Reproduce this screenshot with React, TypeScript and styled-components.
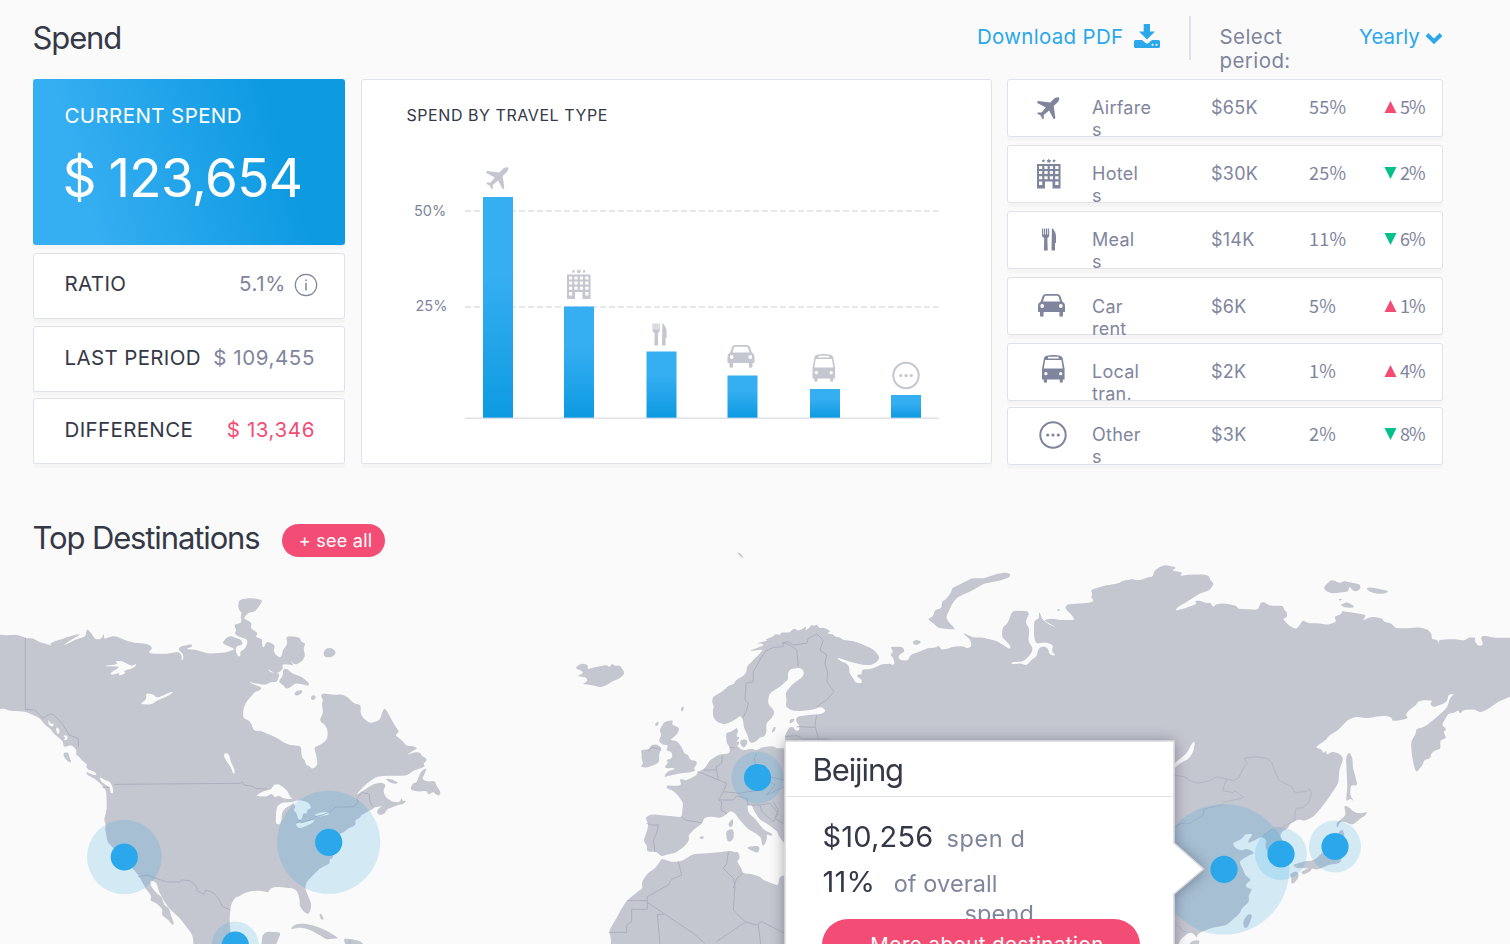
import React from "react";
import styled, { createGlobalStyle } from "styled-components";

const ink = "#343847";
const muted = "#7f859d";
const blue = "#2aa8eb";
const pink = "#f34d75";
const green = "#00c08b";
const land = "#c4c6d0";
const sea = "#fafafa";

const GlobalStyle = createGlobalStyle`
  * { box-sizing: border-box; }
  body { margin: 0; background: ${sea}; overflow: hidden; }
`;

const Page = styled.main`
  width: 1510px;
  height: 944px;
  overflow: hidden;
  display: flex;
  flex-direction: column;
  background: ${sea};
  color: ${ink};
  font-family: Inter, "Liberation Sans", sans-serif;
`;

const Header = styled.header`
  display: flex;
  height: 79px;
  padding: 16px 67px 0 32.5px;
`;

const Title = styled.h1`
  margin: 0;
  font-size: 31px;
  line-height: 44px;
  font-weight: 400;
  letter-spacing: -1.12px;
  white-space: nowrap;
`;

const Download = styled.a`
  display: flex;
  gap: 10.5px;
  margin-left: auto;
  padding-top: 8px;
  height: 44px;
  width: 214px;
  border-right: 2px solid #dfe1e8;
  color: ${blue};
  font-size: 20.5px;
  line-height: 26px;
  letter-spacing: 0.29px;
  white-space: nowrap;
  svg { display: block; flex: none; }
`;

const PeriodLabel = styled.div`
  width: 168px;
  padding: 9px 0 0 28.5px;
  color: ${muted};
  font-size: 20.5px;
  line-height: 24px;
  letter-spacing: 0.42px;
`;

const PeriodValue = styled.div`
  display: flex;
  gap: 5px;
  width: 84px;
  padding-top: 8px;
  color: ${blue};
  font-size: 20.5px;
  line-height: 26px;
  letter-spacing: 0.05px;
  svg { display: block; flex: none; margin-top: 7.5px; }
`;

const Dashboard = styled.section`
  display: grid;
  grid-template-columns: 312px 631px 436px;
  column-gap: 15.5px;
  height: 386px;
  margin-left: 33px;
`;

const Column = styled.div`
  display: flex;
  flex-direction: column;
`;

const Card = styled.div`
  background: #fff;
  border: 1.5px solid #e0e2e9;
  border-radius: 3px;
  box-shadow: 0 4px 0 rgba(40, 44, 60, 0.025);
`;

const SpendCard = styled.div`
  height: 166px;
  padding: 23px 31.5px;
  border-radius: 3px;
  background: linear-gradient(74deg, #36aef2 17%, #0d9ae1 78%);
  box-shadow: 0 4px 0 rgba(40, 44, 60, 0.025);
  color: #fff;
`;

const SpendCaption = styled.div`
  font-size: 20.5px;
  line-height: 28px;
  letter-spacing: 0.4px;
`;

const SpendTotal = styled.div`
  margin: 14px 0 0 -2px;
  font-size: 53px;
  line-height: 68px;
  letter-spacing: -0.7px;
  word-spacing: -1.5px;
  white-space: nowrap;
`;

const StatCard = styled(Card)<{ $gap: number; $lift?: number }>`
  display: flex;
  align-items: center;
  justify-content: space-between;
  height: 66px;
  margin-top: ${(p) => p.$gap}px;
  padding: 0 29px ${(p) => 3 + (p.$lift ?? 0)}px 30.5px;
  font-size: 20.5px;
  letter-spacing: 0.36px;
  white-space: nowrap;
`;

const StatValue = styled.span<{ $alert?: boolean }>`
  display: flex;
  align-items: center;
  gap: 9px;
  color: ${(p) => (p.$alert ? pink : muted)};
  letter-spacing: 0.6px;
  svg { display: block; margin: 2px -3px 0 -1px; }
`;

const ChartCard = styled(Card)`
  height: 385px;
`;

const ChartTitle = styled.h2`
  margin: 0;
  padding: 24px 0 0 45px;
  height: 50px;
  font-size: 16px;
  line-height: 22px;
  font-weight: 400;
  letter-spacing: 0.56px;
`;

const Plot = styled.svg`
  display: block;
  font-size: 14.5px;
  fill: ${muted};
`;

const TypeRow = styled(Card)<{ $gap: number; $shift: number }>`
  display: grid;
  grid-template-columns: 84px 119px 98px 75px 1fr;
  height: 58px;
  margin-top: ${(p) => p.$gap}px;
  padding-top: ${(p) => 17 + p.$shift}px;
  color: ${muted};
  font-size: 18px;
  line-height: 22px;
  letter-spacing: 0.25px;
  white-space: nowrap;
`;

const RowIcon = styled.div<{ $x: number; $y: number }>`
  padding-left: ${(p) => p.$x}px;
  height: 0;
  margin-top: ${(p) => p.$y}px;
  svg { display: block; overflow: visible; }
`;

const Percent = styled.span`
  margin-top: -2px;
  font-family: "Noto Sans CJK SC", sans-serif;
  letter-spacing: 0.2px;
`;

const Change = styled(Percent)`
  display: flex;
  gap: 3px;
  letter-spacing: -1px;
  svg { display: block; margin-top: 6px; }
`;

const MapSection = styled.section`
  position: relative;
  height: 479px;
`;

const MapDrawing = styled.svg`
  display: block;
  height: 479px;
`;

const MapHeading = styled.div`
  position: absolute;
  left: 32.5px;
  top: 51px;
  display: flex;
  gap: 22.5px;
`;

const SeeAll = styled.button`
  margin: 8px 0 0;
  width: 103px;
  height: 33px;
  padding: 0 0 0 4px;
  border: 0;
  border-radius: 17px;
  background: ${pink};
  color: #fff;
  font: 400 18px/33px Inter, sans-serif;
  letter-spacing: 0.27px;
  white-space: nowrap;
`;

const Popover = styled.article`
  position: absolute;
  left: 784px;
  top: 275px;
  width: 391px;
  height: 230px;
  padding: 0 2px;
  filter: drop-shadow(0 1px 7px rgba(30, 35, 50, 0.4));
`;

const PopoverShape = styled.svg`
  position: absolute;
  left: 0;
  top: 0;
  overflow: visible;
`;

const PopoverBody = styled.div`
  position: relative;
`;

const PopoverTitle = styled.h3`
  margin: 0;
  height: 57px;
  padding: 8px 0 0 26.5px;
  border-bottom: 1.5px solid #e4e4e6;
  font-size: 31px;
  line-height: 44px;
  font-weight: 400;
  letter-spacing: -1.1px;
`;

const Fact = styled.p<{ $top: number; $gap: number }>`
  display: flex;
  align-items: baseline;
  gap: ${(p) => p.$gap}px;
  margin: ${(p) => p.$top}px 0 0 36.5px;
  font-size: 29px;
  line-height: 40px;
  letter-spacing: 0.2px;
  white-space: pre;
`;

const FactNote = styled.span<{ $tracking: number }>`
  color: ${muted};
  font-size: 23.5px;
  letter-spacing: ${(p) => p.$tracking}px;
`;

const FactWrap = styled.div`
  margin: -10px 0 0 178.5px;
  height: 26px;
  color: ${muted};
  font-size: 23.5px;
  line-height: 40px;
  letter-spacing: 0.15px;
`;

const MoreButton = styled.button`
  position: relative;
  display: block;
  width: 318px;
  height: 52px;
  margin: -1px 0 0 36px;
  padding: 0 0 2px 12px;
  border: 0;
  border-radius: 26px;
  background: ${pink};
  color: #fff;
  font: 400 20.5px/52px Inter, sans-serif;
  letter-spacing: 0.45px;
`;

type Kind = "plane" | "hotel" | "meal" | "car" | "bus" | "other";

/* Filled travel pictograms; `bg` punches windows and lamps out of the shape. */
function Glyph({ kind, bg = "#fff" }: { kind: Kind; bg?: string }) {
  switch (kind) {
    case "plane":
      return (
        <path d="M22 .4C20.2-.3 18 .7 16.8 2L13.2 5.6 1.1 4.1Q0 4.6 .3 6L8.8 10.4 4.6 15.6.9 15.4 0 16.6 3.7 18.6 5.6 22.3 6.9 21.5 6.7 17.9 12.1 13.5 16.6 22 17.9 21.7Q18.6 21.2 18.2 20L16.7 9 20.4 5.4C21.8 4 22.8 2 22 .4Z" />
      );
    case "hotel":
      return (
        <g>
          <path d="M0 5H23.5V29.5H15.5V22.500H8V29.5H0Z" />
          <path fill={bg} d="M2 7h3.2v3H2zm5.4 0h3.2v3H7.400zm5.400 0H16v3h-3.200zM18.200 7h3.300v3h-3.300zM2 12h3.200v3H2zm5.400 0h3.200v3H7.400zm5.400 0H16v3h-3.200zm5.400 0h3.300v3h-3.300zM2 17.200h3.200v3H2zm5.400 0h3.200v3H7.400zm5.400 0H16v3h-3.200zm5.400 0h3.300v3h-3.300zM2 22.500h3.200v3.500H2zm16.200 0h3.300v3.500h-3.300z" />
          <path d="m11.800-.5.8 1.500 1.700.2-1.200 1.200.3 1.700-1.600-.8-1.500.8.300-1.700-1.300-1.200 1.700-.2zM6.400 0l.6 1.100 1.200.2-.9.800.2 1.300-1.100-.6-1.100.6.200-1.300-.9-.8 1.200-.2zM17.100 0l.6 1.100 1.200.2-.9.800.2 1.300-1.100-.6-1.100.6.200-1.300-.9-.8 1.200-.2z" />
        </g>
      );
    case "meal":
      return (
        <path d="M0 .5H1.100V6.500H1.900V.5H3.200V6.500H4V.5H5.300V6.500H6.100V.5H7.200V7.500Q7.200 9 5.400 10L5.700 22.500H1.900L2.200 10Q0 9 0 7.500ZM9.900 0Q13 2 14 7.500V15H13V22.500H9.500Z" />
      );
    case "car":
      return (
        <g>
          <path d="M8 0H19Q21.500 0 22.400 2L24.300 7.500Q27 9 27 11.500V18H25V21.200Q25 22.700 23.200 22.700T21.400 21.200V18H5.600V21.200Q5.600 22.700 3.800 22.700T2 21.200V18H0V11.500Q0 9 2.700 7.500L4.600 2Q5.500 0 8 0Z" />
          <path fill={bg} d="M8 1.700H19Q20.300 1.700 20.700 3L22 7.500H5L6.300 3Q6.700 1.700 8 1.700Z" />
          <circle fill={bg} cx="4.200" cy="12" r="1.900" />
          <circle fill={bg} cx="22.800" cy="12" r="1.900" />
        </g>
      );
    case "bus":
      return (
        <g>
          <path d="M2 3Q2.500 0 11.300 0T20.600 3L22.600 14V24.500H20.800V26.500Q20.800 27.700 19.300 27.700T17.700 26.500V24.500H5V26.500Q5 27.700 3.400 27.700T1.800 26.500V24.500H0V14Z" />
          <path fill={bg} d="M6 1.800H16.600V3.500H6ZM3.200 5H19.400L20.700 13.500H1.800Z" />
          <circle fill={bg} cx="3.900" cy="18.700" r="1.600" />
          <circle fill={bg} cx="18.700" cy="18.700" r="1.600" />
        </g>
      );
    default:
      return (
        <g>
          <circle cx="14" cy="14" r="12.700" fill="none" stroke="currentColor" strokeWidth="2" />
          <circle cx="8.700" cy="14" r="1.600" />
          <circle cx="14" cy="14" r="1.600" />
          <circle cx="19.300" cy="14" r="1.600" />
        </g>
      );
  }
}

type RowData = {
  kind: Kind;
  lines: [string, string];
  amount: string;
  share: string;
  up: boolean;
  change: string;
  gap: number;
  shift: number;
  x: number;
  y: number;
};

const rows: RowData[] = [
  { kind: "plane", lines: ["Airfare", "s"], amount: "$65K", share: "55%", up: true, change: "5%", gap: 0, shift: 0, x: 28.5, y: 0 },
  { kind: "hotel", lines: ["Hotel", "s"], amount: "$30K", share: "25%", up: false, change: "2%", gap: 8, shift: 0, x: 29, y: -4.500 },
  { kind: "meal", lines: ["Meal", "s"], amount: "$14K", share: "11%", up: false, change: "6%", gap: 8, shift: 0, x: 34, y: -1 },
  { kind: "car", lines: ["Car", "rent"], amount: "$6K", share: "5%", up: true, change: "1%", gap: 8, shift: 1, x: 30, y: -1 },
  { kind: "bus", lines: ["Local", "tran."], amount: "$2K", share: "1%", up: true, change: "4%", gap: 8, shift: 0, x: 33.5, y: -6 },
  { kind: "other", lines: ["Other", "s"], amount: "$3K", share: "2%", up: false, change: "8%", gap: 6, shift: -1, x: 31, y: -4 },
];

const bars: { kind: Kind; x: number; top: number; ix: number; iy: number }[] = [
  { kind: "plane", x: 483, top: 197, ix: 486, iy: 167 },
  { kind: "hotel", x: 564, top: 306.500, ix: 567, iy: 269.500 },
  { kind: "meal", x: 646.500, top: 351.500, ix: 652.500, iy: 323 },
  { kind: "car", x: 727.500, top: 375.500, ix: 727.500, iy: 345 },
  { kind: "bus", x: 810, top: 389, ix: 812.500, iy: 354 },
  { kind: "other", x: 891, top: 395, ix: 892, iy: 361.500 },
];

function SpendChart() {
  return (
    <Plot width="628" height="332" viewBox="362 130 628 332">
      <defs>
        <linearGradient id="bar" x1="0" y1="0" x2="0" y2="1">
          <stop offset="0.35" stopColor="#36aef2" />
          <stop offset="1" stopColor="#0d9ae1" />
        </linearGradient>
      </defs>
      <g stroke="#dfe1e6" strokeWidth="1.500">
        <path d="M465 211H939M465 307H939" strokeDasharray="6 3" />
        <path d="M465 418.200H939" />
      </g>
      <text x="414" y="216" letterSpacing="0">50%</text>
      <text x="415.500" y="311" letterSpacing="0">25%</text>
      {bars.map((b) => (
        <g key={b.kind}>
          <rect x={b.x} y={b.top} width="30" height={417.700 - b.top} fill="url(#bar)" />
          <g transform={`translate(${b.ix} ${b.iy})`} fill={land} color={land}>
            <Glyph kind={b.kind} />
          </g>
        </g>
      ))}
    </Plot>
  );
}

/* Turns closed point lists into outlines whose corners are softly rounded. */
function coast(outline: string | string[]) {
  const source = Array.isArray(outline) ? outline.join("") : outline;
  return source
    .split("Z")
    .filter(Boolean)
    .map((ring) => {
      const n = (ring.match(/-?[\d.]+/g) ?? []).map(Number);
      const pts: [number, number][] = [];
      for (let i = 0; i + 1 < n.length; i += 2) pts.push([n[i], n[i + 1]]);
      const toward = (a: [number, number], b: [number, number]) => {
        const t = Math.min(0.4, 9 / (Math.hypot(b[0] - a[0], b[1] - a[1]) || 1));
        return `${(a[0] + (b[0] - a[0]) * t).toFixed(1)} ${(a[1] + (b[1] - a[1]) * t).toFixed(1)}`;
      };
      return (
        pts
          .map((p, i) => {
            const before = pts[(i + pts.length - 1) % pts.length];
            const after = pts[(i + 1) % pts.length];
            return `${i ? "L" : "M"}${toward(p, before)}Q${p[0]} ${p[1]} ${toward(p, after)}`;
          })
          .join("") + "Z"
      );
    })
    .join("");
}

/* Every region is traced at three units per pixel in its own frame. */
const america =
  "M-20 402 20 406 45 404 70 410 78 415 100 415 115 425 135 431 155 437 150 430 175 420 185 418 200 412 225 405 240 402 235 408 215 418 195 432 190 437 215 425 235 415 250 412 258 405 260 386 272 396 285 418 303 418 312 400 312 418 330 410 345 408 370 418 385 424 405 428 445 432 458 445 445 456 455 461 500 461 535 455 545 465 545 482 550 478 550 462 535 450 540 440 575 432 578 440 555 447 585 449 625 461 675 458 705 448 690 440 666 430 680 412 695 408 710 415 725 420 728 435 710 437 706 450 714 470 722 468 720 455 735 447 742 430 742 418 715 410 703 400 710 390 703 380 705 372 725 370 722 345 727 340 715 328 715 305 725 297 755 294 788 300 780 315 765 335 745 338 730 355 745 362 755 370 752 385 775 400 765 410 788 418 785 430 790 445 800 424 815 430 825 437 820 455 835 472 845 470 848 450 863 432 858 412 870 408 900 412 903 425 917 430 910 445 916 468 905 485 885 495 870 480 882 497 858 492 845 495 850 505 835 520 820 518 800 505 812 518 840 520 830 548 815 545 795 555 745 546 765 555 785 562 780 572 765 575 740 605 730 625 729 655 750 662 762 693 780 692 805 702 835 715 845 725 870 735 903 738 905 772 915 782 918 795 928 798 937 808 953 795 950 770 942 742 955 738 975 725 983 712 983 690 975 675 958 662 970 638 965 610 970 600 962 588 968 580 1005 585 1025 583 1045 592 1060 610 1083 615 1081 640 1090 655 1110 670 1140 660 1145 642 1153 623 1165 640 1175 660 1190 685 1198 695 1185 706 1200 715 1220 738 1240 738 1253 745 1240 752 1218 766 1245 756 1262 758 1265 768 1280 775 1278 785 1270 790 1275 800 1240 812 1225 824 1215 827 1150 827 1125 832 1095 855 1068 885 1085 875 1100 865 1120 852 1145 847 1158 855 1150 870 1155 890 1175 905 1198 908 1205 893 1208 903 1220 902 1210 912 1195 915 1160 928 1155 940 1140 946 1130 938 1135 925 1150 918 1125 922 1112 930 1095 940 1085 945 1078 955 1065 960 1068 975 1045 985 1030 998 1020 1000 1000 1065 998 1075 988 1078 990 1090 960 1105 940 1125 920 1145 915 1165 925 1190 934 1210 932 1230 925 1243 910 1235 898 1215 900 1205 893 1175 880 1165 855 1163 830 1160 810 1165 805 1178 785 1172 760 1172 735 1178 715 1190 705 1193 692 1215 689 1250 690 1290 710 1350 582 1350 578 1305 555 1275 540 1255 510 1228 490 1200 475 1170 470 1148 450 1140 452 1158 470 1180 485 1190 492 1215 508 1225 512 1245 523 1272 515 1275 508 1262 485 1245 488 1228 470 1210 450 1202 455 1188 440 1170 433 1158 415 1125 400 1108 370 1070 340 1045 322 1025 318 1000 315 985 318 975 312 960 320 930 320 898 318 870 308 858 290 840 258 822 260 815 280 825 292 825 280 812 265 810 258 800 262 793 250 785 235 768 228 765 230 750 215 735 190 742 190 725 175 712 160 700 150 685 135 675 120 655 78 635 25 632 15 625 -20 630Z";
const americaIsles = [
  "M970 460 975 448 988 443 1003 448 1008 460 995 472 975 472Z",
  "M835 545 850 525 848 510 860 505 875 520 905 530 928 550 925 558 905 552 885 550 872 562 858 567 850 555Z",
  "M882 582 890 573 908 570 905 580 890 588Z",
  "M932 592 938 585 948 588 943 600 935 600Z",
  "M190 758 205 757 207 768 215 788 205 785 192 772Z",
  "M1230 870 1238 850 1250 848 1262 815 1280 803 1275 820 1265 838 1285 845 1305 842 1308 855 1322 875 1318 888 1305 882 1300 875 1285 885 1280 872 1255 875Z",
  "M1155 835 1175 838 1195 847 1190 852 1170 848Z",
  "M870 1288 885 1273 910 1270 945 1278 980 1292 1017 1315 975 1318 965 1308 930 1290 905 1282Z",
  "M958 1242 965 1242 972 1260 962 1258Z",
  "M783 1350 787 1305 800 1295 843 1297 835 1318 820 1350Z",
  "M1030 1315 1060 1318 1085 1325 1097 1345 1040 1345Z",
];
const americaWater = [
  "M312 498 355 492 345 484 365 482 378 490 398 498 408 490 407 500 390 508 370 512 378 520 355 528 360 518 335 525 330 520 345 510 360 500Z",
  "M420 612 440 598 437 580 458 582 472 594 515 575 520 577 505 588 470 602 455 614Z",
  "M670 765 678 758 688 765 692 785 704 808 704 822 698 820 695 805 680 785Z",
  "M767 888 785 875 815 868 820 855 835 852 850 862 862 872 870 890 878 898 850 895 835 886 825 893 815 880 800 890Z",
  "M830 920 845 908 885 905 878 912 855 925 845 940 845 960 838 975 827 970 828 945Z",
  "M878 905 895 900 925 906 935 925 922 928 920 942 910 938 905 960 895 960 890 940 880 930 887 920Z",
  "M887 970 905 968 922 963 945 958 940 968 918 978 900 985 890 980Z",
  "M942 945 960 938 988 935 985 945 955 950Z",
  "M298 830 315 840 330 845 338 860 340 880 332 880 330 865 318 855 303 845Z",
  "M145 658 152 672 162 670 160 680 145 675Z",
  "M170 680 180 690 175 705 168 692Z",
  "M188 708 202 705 203 720 190 720 198 713Z",
];
const americaBorders =
  "M76 413V628L105 630 128 655 148 642 162 645 190 675 207 705 235 715 235 742M307 862H330M342 853 722 850 727 845 732 855 755 858 770 866 800 867M945 950 968 945 990 935 1005 922 1060 920 1072 910 1072 895 1085 878 1108 882 1110 905 1118 920M890 968 900 960 905 968 940 958M415 1130 440 1125 500 1146 540 1146 545 1140 570 1142 590 1160 592 1172 612 1183 618 1170 640 1178 655 1195 668 1220 692 1230M1050 1320V1332";

const scandinavia =
  "M568 333 595 322 612 316 605 310 590 312 605 305 622 303 615 298 640 290 645 282 663 285 660 278 690 277 695 270 705 265 712 272 722 270 740 258 735 272 750 262 752 255 765 258 770 253 778 265 790 262 812 273 800 280 820 283 825 290 840 292 850 300 880 303 905 312 940 328 955 345 958 355 950 367 930 376 900 373 870 365 830 352 840 363 860 370 868 380 868 400 880 415 885 428 908 430 905 418 890 410 895 402 915 405 940 413 945 405 930 388 950 385 970 373 995 370 995 640 675 640 675 585 688 562 700 560 705 572 718 572 718 555 708 545 710 530 745 525 785 522 798 513 785 500 755 510 720 513 695 512 677 500 680 480 676 458 700 430 730 410 732 392 718 383 690 388 683 400 685 418 660 440 628 460 623 490 645 515 635 535 618 550 620 575 613 590 600 592 585 608 568 608 563 585 552 565 548 535 540 527 525 540 495 553 475 548 460 535 458 510 462 500 457 490 457 472 490 453 505 437 522 432 528 420 550 408 560 395 560 380 580 360 600 340 610 328Z";
const europe =
  "M508 618 500 610 498 585 500 578 515 575 530 563 535 572 528 590 540 592 530 603 530 618 550 632 575 625 590 632 605 622 640 618 650 625 675 625 760 620 760 910 675 910 668 905 655 885 652 875 640 865 620 850 600 840 590 825 580 808 575 795 562 795 565 820 583 833 600 855 612 870 638 882 635 888 618 883 622 893 612 918 605 915 605 895 590 882 565 868 548 850 535 835 525 820 512 812 500 822 480 835 460 830 432 832 428 850 410 862 385 885 388 900 375 918 345 940 325 942 305 950 290 935 260 935 262 918 250 903 262 870 265 850 255 832 275 823 330 828 365 832 367 810 370 790 355 768 340 752 320 745 320 736 345 738 365 735 358 718 370 718 375 722 392 715 410 705 412 697 435 685 450 660 475 645 485 643 510 640Z";
const africa =
  "M305 955 330 965 345 965 365 963 400 942 440 940 495 935 510 932 525 937 535 935 540 955 530 965 545 985 548 1000 575 1002 600 1010 610 1020 635 1030 655 1037 658 1010 675 1005 760 1005 760 1230 153 1230 153 1195 147 1175 155 1158 175 1125 182 1110 200 1082 240 1050 248 1045 245 1025 265 998 285 985 300 965Z";
const europeIsles = [
  "M45 385 62 370 85 375 82 388 98 383 115 380 140 375 150 382 155 370 165 378 180 376 195 400 180 415 155 425 140 435 120 442 95 435 66 432 82 425 80 412 50 408 70 400 65 392Z",
  "M305 560 312 545 340 540 335 555 358 562 355 578 340 592 330 600 350 603 365 620 372 640 385 645 390 660 410 663 410 675 400 685 408 692 390 697 360 700 335 705 310 712 325 692 340 690 345 683 325 685 312 682 325 668 318 660 338 655 335 635 318 632 325 615 308 615 295 602 305 585 298 570Z",
  "M245 640 242 630 268 628 270 618 285 612 300 618 305 628 297 640 298 665 290 672 260 683 240 680 250 670 245 660Z",
  "M285 550 295 545 297 553 287 560Z",
  "M362 505 370 498 372 508 365 516Z",
  "M540 600 560 598 563 608 552 625 542 615Z",
  "M530 605 538 605 535 618 528 612Z",
  "M635 575 640 562 648 560 645 572 637 578Z",
  "M688 540 700 535 705 540 690 552Z",
  "M505 850 518 835 520 850 515 862 507 860Z",
  "M498 872 520 866 522 895 508 907 500 900Z",
  "M418 890 430 888 432 895 422 898Z",
  "M560 922 578 918 600 918 595 940 570 930Z",
  "M530 37 540 39 553 55 543 51Z",
];
const europeBorders =
  "M548 535 560 510 565 490 555 480 558 430 580 425 580 395 590 378 605 350 618 332 640 322 670 320 668 308 690 315 710 330 715 380M668 308 685 305 700 315 740 310 745 295 770 282 790 300 780 330 800 345 795 370 803 400 800 425 822 455 800 480 770 500M770 525 765 555 775 597M710 560 765 562M675 590 710 587 730 597H805M510 622 525 624M487 645 485 670 468 680 475 720 500 730 490 755 475 780 485 785 483 810 500 820M413 695 440 705 475 720M430 690 470 690M490 755 540 760 565 755 590 752M480 780 520 780 530 768 560 775M590 640 583 655 590 685M625 710 675 720M630 725 645 735 620 765 675 740M560 775 565 795 600 795 605 815 640 845 655 820 630 790 600 795M640 785 655 810 645 835 670 850M365 830 375 840 425 848M260 850 275 855 295 855 290 880 280 900 285 935M265 635 275 622 300 628M505 937 500 970 490 985 520 1015 525 1040 520 1110 555 1145 550 1150 470 1205M520 1045 530 1015 548 1000M355 965 365 1005 335 1018 325 1035 262 1070V1108H215V1145L200 1155V1177H147M202 1082H262M262 1087 400 1180 435 1210M300 1212 292 1123H312M555 1145 590 1155 605 1145 675 1180M595 1155 602 1212";

const russia =
  "M245 388 270 388 290 380 310 371 345 375 340 352 330 345 340 335 330 320 368 320 375 335 355 345 358 360 385 362 390 345 420 335 440 325 470 322 475 315 485 330 505 325 520 320 550 318 560 326 575 320 572 300 547 278 580 292 610 293 650 303 690 328 692 318 665 290 668 262 683 250 697 212 745 213 748 235 775 235 778 213 785 235 800 250 828 262 790 240 815 235 840 240 885 240 875 225 855 205 860 193 935 188 942 180 932 172 938 165 932 150 970 138 1020 130 1025 123 1060 118 1075 122 1118 110 1125 95 1150 77 1170 82 1170 650 245 650Z";
const siberia =
  "M-20 140 0 135 25 130 45 122 70 117 75 122 100 120 110 112 130 112 130 97 145 82 165 75 200 82 185 92 218 97 210 108 245 103 285 104 297 108 300 120 312 130 300 150 270 160 235 183 205 200 195 212 225 205 260 192 255 183 270 182 288 190 302 187 308 202 320 192 345 190 380 198 385 207 405 207 445 210 450 190 460 185 480 197 520 197 522 210 530 215 532 232 518 235 535 255 557 268 568 258 578 240 595 250 630 250 652 255 680 245 672 230 695 222 695 213 740 220 770 225 757 242 785 230 818 235 820 245 845 250 855 265 885 265 930 262 955 270 965 283 965 297 983 300 985 312 987 300 1025 297 1065 302 1075 292 1097 293 1093 303 1105 318 1120 315 1112 290 1125 287 1150 293 1220 293 1220 462 1165 485 1130 510 1110 518 1095 508 1060 510 1050 522 1045 510 1030 520 1015 520 995 555 1010 568 1000 575 1010 595 990 600 992 628 975 630 962 643 962 655 942 660 938 675 918 698 910 670 905 640 903 605 918 580 918 567 945 560 970 540 1010 505 1022 470 1035 463 1015 463 1012 485 985 497 968 502 960 490 968 483 950 480 925 483 918 495 895 512 887 525 895 535 865 542 845 542 848 535 830 527 800 530 770 535 740 530 715 538 685 570 655 588 650 598 615 622 635 628 640 640 648 632 650 645 665 635 688 640 700 655 688 690 685 730 655 775 630 808 610 830 585 843 565 838 540 850 535 865 515 875 510 890 530 920 545 960 525 980 492 980 478 945 465 918 470 900 455 890 415 910 415 900 430 882 405 882 395 898 368 908 375 925 395 932 410 925 435 938 410 950 387 965 400 990 405 1005 425 1020 408 1030 408 1042 428 1048 415 1065 418 1085 395 1105 390 1120 350 1155 300 1165 262 1182 262 1195 250 1180 235 1178 210 1200 200 1230 -20 1230Z";
const novaya =
  "M442 237 460 230 463 210 485 205 485 185 498 178 515 155 515 145 550 128 575 115 610 115 650 102 680 97 692 103 688 112 665 120 610 132 575 152 535 170 520 185 498 230 505 245 527 268 510 268 475 264 460 250Z";
const kolguev = "M397 305 410 299 425 306 412 315 402 314ZM830 208 842 208 835 215Z";
const obGulf =
  "M745 225 752 218 762 222 775 210 778 235 762 242 762 290 768 312 795 306 820 315 815 335 828 347 808 345 805 325 790 318 775 325 770 350 755 358 740 377 722 370 695 373 695 366 730 365 755 340 758 322 745 305 748 265 736 248Z";
const baikal = "M190 672 230 640 248 606 255 606 250 635 235 658 212 668 190 688Z";
const siberiaIsles = [
  "M642 140 665 118 690 130 700 123 750 133 752 145 740 155 728 152 718 138 715 155 690 158 665 160 645 152Z",
  "M768 145 780 142 835 152 830 160 805 162 780 156Z",
  "M690 195 710 186 728 195 733 203 705 203Z",
  "M683 178 697 176 692 183Z",
  "M708 650 718 636 728 655 728 680 743 737 722 735 720 765 732 785 722 775 708 785 712 740Z",
  "M702 798 712 798 735 818 755 820 772 815 765 828 750 835 742 845 725 855 705 845 690 845 682 865 678 850 708 825Z",
  "M690 870 700 870 705 900 715 920 695 955 690 970 655 975 620 990 608 985 560 985 548 975 590 962 612 962 640 935 665 920Z",
  "M572 995 605 980 605 992 580 1005Z",
  "M538 1003 560 992 568 1010 550 1032 543 1028 545 1012Z",
  "M400 1140 415 1122 427 1125 420 1148 408 1167 400 1158Z",
  "M236 1216 245 1202 270 1200 265 1216Z",
];
const asiaBorders =
  "M193 706 222 710 240 722 265 730 305 720 320 710 350 717 370 722 385 715 400 685 412 672 402 655 440 650 472 655 485 668 505 720 545 740 555 757 590 755 597 747 605 760 595 788 580 803 558 805 555 820 555 840 540 850 515 863 492 863 460 887M350 717 337 752 370 758 375 752 398 770 395 775 345 785 335 795 282 807 280 825 240 850H215L193 860M193 1155 210 1160 215 1172 230 1175";

const pins: [number, number, number][] = [
  [124.300, 857, 37.300],
  [328.700, 842.300, 51.500],
  [235.300, 945, 23.500],
  [757.500, 777.500, 26],
  [1224, 869.300, 65.300],
  [1281, 854, 26],
  [1335, 846.500, 26],
];

function WorldMap() {
  return (
    <MapDrawing width="1510" height="479" viewBox="0 465 1510 479" fill={land} strokeLinejoin="round">
      <g transform="translate(0 500) scale(.33333)">
        <path d={coast(america)} />
        <path d={coast(americaIsles)} />
        <path d={coast(americaWater)} fill={sea} />
        <path d={americaBorders} fill="none" stroke="#a8aab9" strokeWidth="2.500" />
      </g>
      <g transform="translate(560 540) scale(.33333)">
        <path d={coast(scandinavia)} />
        <path d={coast(europe)} />
        <path d={coast(africa)} />
        <path d={coast(europeIsles)} />
      </g>
      <g transform="translate(780 540) scale(.33333)">
        <path d={coast(russia)} />
        <path d={coast(novaya)} />
        <path d={coast(kolguev)} />
      </g>
      <g transform="translate(1110 540) scale(.33333)">
        <path d={coast(siberia)} />
        <path d={coast(siberiaIsles)} />
        <path d={coast(baikal)} fill={sea} />
        <path d={asiaBorders} fill="none" stroke="#b0b2c0" strokeWidth="2.500" />
      </g>
      <path transform="translate(780 540) scale(.33333)" d={coast(obGulf)} fill={sea} />
      <path
        transform="translate(560 540) scale(.33333)"
        d={europeBorders}
        fill="none"
        stroke="#a8aab9"
        strokeWidth="2.500"
      />
      {pins.map(([x, y, r]) => (
        <circle key={x} cx={x} cy={y} r={r} fill="rgba(42,163,225,.19)" />
      ))}
      {pins.map(([x, y]) => (
        <circle key={x} cx={x} cy={y} r="13.600" fill={blue} />
      ))}
    </MapDrawing>
  );
}

export default function App() {
  return (
    <Page>
      <GlobalStyle />
      <Header>
        <Title>Spend</Title>
        <Download>
          Download PDF
          <svg width="26" height="25" viewBox="0 0 26 25" fill={blue}>
            <path d="M9.700 0H16V7.500H21L13 15.500 5 7.500H9.700ZM1.500 16H8L11.500 19Q13 20 14.500 19L18 16H24.500Q26 16 26 17.500V22.500Q26 24 24.500 24H1.500Q0 24 0 22.500V17.500Q0 16 1.500 16Z" />
            <circle cx="18.500" cy="20.700" r="1" fill="#fff" />
            <circle cx="22.500" cy="20.700" r="1" fill="#fff" />
          </svg>
        </Download>
        <PeriodLabel>
          Select
          <br />
          period:
        </PeriodLabel>
        <PeriodValue>
          Yearly
          <svg width="18" height="13" viewBox="0 0 18 13">
            <path d="M2 2.500 9 9.500 16 2.500" fill="none" stroke={blue} strokeWidth="4" />
          </svg>
        </PeriodValue>
      </Header>
      <Dashboard>
        <Column>
          <SpendCard>
            <SpendCaption>CURRENT SPEND</SpendCaption>
            <SpendTotal>$ 123,654</SpendTotal>
          </SpendCard>
          <StatCard $gap={8} $lift={2}>
            RATIO
            <StatValue>
              5.1%
              <svg width="24" height="24" viewBox="0 0 24 24" fill="none" stroke={muted}>
                <circle cx="12" cy="12" r="10.700" strokeWidth="1.200" />
                <path d="M12 10V17.500M12 6.500V8.200" strokeWidth="1.500" />
              </svg>
            </StatValue>
          </StatCard>
          <StatCard $gap={7}>
            LAST PERIOD<StatValue>$ 109,455</StatValue>
          </StatCard>
          <StatCard $gap={6}>
            DIFFERENCE<StatValue $alert>$ 13,346</StatValue>
          </StatCard>
        </Column>
        <ChartCard>
          <ChartTitle>SPEND BY TRAVEL TYPE</ChartTitle>
          <SpendChart />
        </ChartCard>
        <Column>
          {rows.map((r) => (
            <TypeRow key={r.kind} $gap={r.gap} $shift={r.shift}>
              <RowIcon $x={r.x} $y={r.y - r.shift}>
                <svg width="28" height="30" fill={muted} color={muted}>
                  <Glyph kind={r.kind} />
                </svg>
              </RowIcon>
              <span>
                {r.lines[0]}
                <br />
                {r.lines[1]}
              </span>
              <span>{r.amount}</span>
              <Percent>{r.share}</Percent>
              <Change>
                <svg width="13" height="12" viewBox="0 0 13 12">
                  {r.up ? <path d="M6.500 0 12.500 12H.5Z" fill={pink} /> : <path d="M.5 0H12.500L6.500 12Z" fill={green} />}
                </svg>
                {r.change}
              </Change>
            </TypeRow>
          ))}
        </Column>
      </Dashboard>
      <MapSection>
        <WorldMap />
        <MapHeading>
          <Title as="h2">Top Destinations</Title>
          <SeeAll>+ see all</SeeAll>
        </MapHeading>
        <Popover>
          <PopoverShape width="391" height="230" viewBox="0 0 391 230">
            <path d="M1 1H390V103L419.500 129 390 154V240H1Z" fill="#fff" stroke="#dadadd" strokeWidth="1.600" />
          </PopoverShape>
          <PopoverBody>
            <PopoverTitle>Beijing</PopoverTitle>
            <Fact $top={20} $gap={13}>
              $10,256<FactNote $tracking={0.6}>spen d</FactNote>
            </Fact>
            <Fact $top={3} $gap={18.5}>
              11%<FactNote $tracking={0.1}>of overall</FactNote>
            </Fact>
            <FactWrap>spend</FactWrap>
            <MoreButton>More about destination</MoreButton>
          </PopoverBody>
        </Popover>
      </MapSection>
    </Page>
  );
}
